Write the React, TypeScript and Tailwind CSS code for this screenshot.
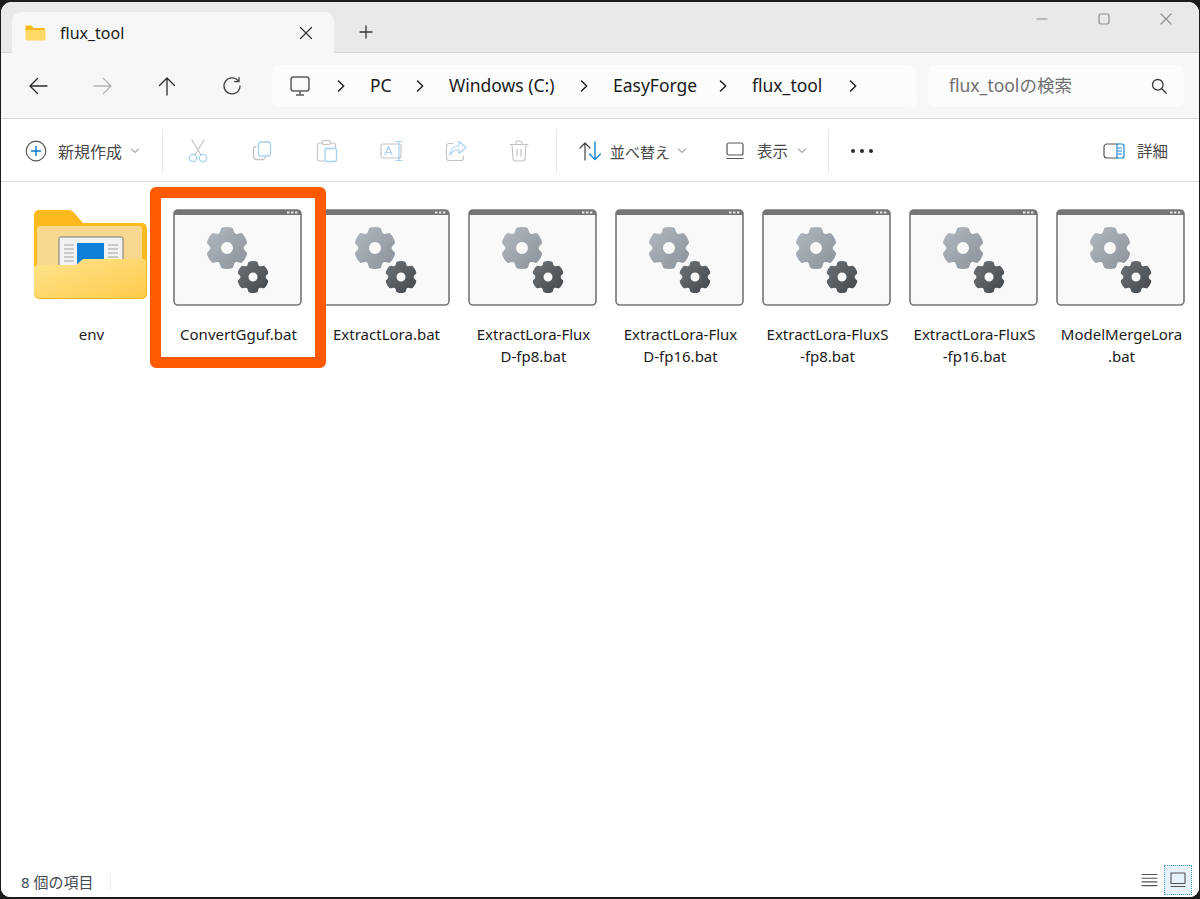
import React from "react";

const FONT = "font-['Noto_Sans','Noto_Sans_CJK_JP',sans-serif]";

const FILES = [
  ["ConvertGguf.bat"],
  ["ExtractLora.bat"],
  ["ExtractLora-Flux", "D-fp8.bat"],
  ["ExtractLora-Flux", "D-fp16.bat"],
  ["ExtractLora-FluxS", "-fp8.bat"],
  ["ExtractLora-FluxS", "-fp16.bat"],
  ["ModelMergeLora", ".bat"],
];

// gear outline with six rounded lobes, first lobe pointing up
const gearPath = (cx: number, cy: number, outer: number, inner: number, hole: number): string => {
  const pt = (r: number, deg: number) => {
    const a = ((deg - 90) * Math.PI) / 180;
    return `${(cx + r * Math.cos(a)).toFixed(2)} ${(cy + r * Math.sin(a)).toFixed(2)}`;
  };
  let d = "";
  for (let i = 0; i < 6; i++) {
    const c = i * 60;
    d += `${i === 0 ? "M" : "L"}${pt(inner * 1.04, c - 25)} `;
    d += `L${pt(outer * 0.95, c - 18)} Q${pt(outer * 1.03, c - 16)} ${pt(outer, c)} Q${pt(outer * 1.03, c + 16)} ${pt(outer * 0.95, c + 18)} `;
    d += `L${pt(inner * 1.04, c + 25)} Q${pt(inner * 0.98, c + 30)} ${pt(inner * 1.04, c + 35)} `;
  }
  d += "Z ";
  d += `M${cx - hole} ${cy} a${hole} ${hole} 0 1 0 ${hole * 2} 0 a${hole} ${hole} 0 1 0 ${-hole * 2} 0 Z`;
  return d;
};

function BatIcon({ id }: { id: number }) {
  return (
    <svg width="129" height="97" viewBox="0 0 129 97" className="block">
      <defs>
        <linearGradient id={`big${id}`} x1="0" y1="0" x2="1" y2="1">
          <stop offset="0" stopColor="#b2b8bf" />
          <stop offset="1" stopColor="#8c9299" />
        </linearGradient>
        <linearGradient id={`small${id}`} x1="0" y1="0" x2="1" y2="1">
          <stop offset="0" stopColor="#6e7377" />
          <stop offset="1" stopColor="#43474b" />
        </linearGradient>
      </defs>
      <rect x="1" y="1" width="127" height="95" rx="4" fill="#f9f9f9" stroke="#757575" strokeWidth="1.6" />
      <path d="M1 5a4 4 0 0 1 4-4h119a4 4 0 0 1 4 4v1H1z" fill="#757575" />
      <rect x="114" y="2.5" width="2.4" height="2" fill="#e8e8e8" />
      <rect x="118" y="2.5" width="2.4" height="2" fill="#e8e8e8" />
      <rect x="122" y="2.5" width="2.4" height="2" fill="#e8e8e8" />
      <path d={gearPath(54, 39, 21, 16.5, 6)} fill={`url(#big${id})`} fillRule="evenodd" />
      <path d={gearPath(80, 68, 16, 12.5, 4.5)} fill={`url(#small${id})`} fillRule="evenodd" />
    </svg>
  );
}

function FolderIcon() {
  return (
    <svg width="114" height="90" viewBox="0 0 114 90" className="block">
      <defs>
        <linearGradient id="front" x1="0" y1="0" x2="1" y2="1">
          <stop offset="0" stopColor="#ffe48f" />
          <stop offset="1" stopColor="#fdcb4a" />
        </linearGradient>
      </defs>
      <path d="M1 5a5 5 0 0 1 5-5h29c4 0 6 2 8 5l7 8h59a5 5 0 0 1 5 5v66a5 5 0 0 1-5 5H6a5 5 0 0 1-5-5z" fill="#fcba1f" />
      <path d="M4 19a3 3 0 0 1 3-3h99a3 3 0 0 1 3 3v40H4z" fill="#f6d88f" />
      <rect x="26" y="27" width="64" height="30" rx="1.5" fill="#f2f2f2" stroke="#777" strokeWidth="1" />
      <rect x="44" y="33" width="27" height="24" fill="#0f80d7" />
      <path d="M31 35h10M31 39h10M31 43h10M31 47h10M31 51h10M75 35h10M75 39h10M75 43h10M75 47h10M75 51h10" stroke="#bdbdbd" strokeWidth="1.4" />
      <path d="M1 59a4 4 0 0 1 4-4h38l7-6h60a3 3 0 0 1 3 3v31a5 5 0 0 1-5 5H6a5 5 0 0 1-5-5z" fill="url(#front)" />
    </svg>
  );
}

function Ico({ w = 24, h = 24, children }: { w?: number; h?: number; children: React.ReactNode }) {
  return (
    <svg width={w} height={h} viewBox={`0 0 ${w} ${h}`} fill="none" strokeLinecap="round" strokeLinejoin="round" className="block shrink-0">
      {children}
    </svg>
  );
}

const Chevron = () => (
  <Ico w={10} h={14}>
    <path d="M2.5 2l5.2 5-5.2 5" stroke="#1f1f1f" strokeWidth="1.5" />
  </Ico>
);

const Caret = () => (
  <Ico w={10} h={8}>
    <path d="M1.5 2l3.5 3.5L8.5 2" stroke="#6a6a6a" strokeWidth="1" />
  </Ico>
);

const Divider = () => <div className="h-[43px] w-px bg-[#e8e8e8] shrink-0" />;

const GREY = "#c4c4c4";
const BLUE = "#a5d2f4";

function Crumb({ label, w }: { label?: string; w: number }) {
  return (
    <div className="flex items-center shrink-0">
      <Chevron />
      {label ? <span className="ml-[24px] text-[17.5px] text-[#1b1b1b] whitespace-nowrap" style={{ width: w }}>{label}</span> : null}
    </div>
  );
}

export default function App() {
  return (
    <div className={`w-[1200px] h-[899px] bg-[#1c1c1c] pt-[2px] px-px pb-[2px] overflow-hidden ${FONT}`}>
      <div className="relative h-full w-full rounded-t-[11px] rounded-b-[9px] overflow-hidden bg-white flex flex-col">
        {/* title bar */}
        <div className="h-[51px] bg-[#e9e9e9] border-b border-[#d7d7d7] flex items-end pl-[11px] shrink-0">
          <div className="h-[41px] w-[322px] -mb-px bg-[#f7f7f7] rounded-t-[9px] flex items-center pl-[13px] shrink-0">
            <svg width="21" height="16" viewBox="0 0 21 16" className="block shrink-0">
              <path d="M0.5 1.5a1 1 0 0 1 1-1h5l2 2.5h10.5a1 1 0 0 1 1 1V6H0.5z" fill="#fbb91f" />
              <path d="M0.5 5h19.5a.5.5 0 0 1 .5.5v9a1 1 0 0 1-1 1h-18a1 1 0 0 1-1-1z" fill="#fed966" />
            </svg>
            <span className="ml-[14px] text-[16px] text-[#1b1b1b] w-[239px]">flux_tool</span>
            <Ico w={14} h={14}>
              <path d="M1.5 1.5l11 11M12.5 1.5l-11 11" stroke="#333" strokeWidth="1.2" />
            </Ico>
          </div>
          <div className="ml-[25px] mb-[13px] shrink-0">
            <Ico w={14} h={14}>
              <path d="M7 1v12M1 7h12" stroke="#333" strokeWidth="1.3" />
            </Ico>
          </div>
          <div className="flex-1" />
          <div className="self-start flex items-center gap-[50px] pt-[11px] pr-[27px]">
            <Ico w={12} h={12}>
              <path d="M1 6h10" stroke="#8d8d8d" strokeWidth="1.2" />
            </Ico>
            <Ico w={12} h={12}>
              <rect x="1" y="1" width="10" height="10" rx="1.5" stroke="#8d8d8d" strokeWidth="1.2" />
            </Ico>
            <Ico w={12} h={12}>
              <path d="M1 1l10 10M11 1L1 11" stroke="#8d8d8d" strokeWidth="1.1" />
            </Ico>
          </div>
        </div>

        {/* nav row */}
        <div className="h-[66px] bg-[#f7f7f7] border-b border-[#d9d9d9] flex items-center pl-[26px] pr-[15px] shrink-0">
          <div className="flex items-center gap-[42.5px] w-[245px] shrink-0">
            <Ico w={22} h={22}>
              <path d="M20 11H3M10.5 3.5L3 11l7.5 7.5" stroke="#2a2a2a" strokeWidth="1.3" />
            </Ico>
            <Ico w={22} h={22}>
              <path d="M2 11h17M11.5 3.5L19 11l-7.5 7.5" stroke="#b5b5b5" strokeWidth="1.3" />
            </Ico>
            <Ico w={22} h={22}>
              <path d="M11 20V3M3.5 10.5L11 3l7.5 7.5" stroke="#2a2a2a" strokeWidth="1.3" />
            </Ico>
            <Ico w={22} h={22}>
              <path d="M17.5 6.2A8 8 0 1 0 19 11M18 2.5v4.2h-4.4" stroke="#444" strokeWidth="1.3" />
            </Ico>
          </div>
          <div className="h-[42px] w-[645px] bg-[#fcfcfc] rounded-[7px] flex items-center pl-[18px] shrink-0">
            <svg width="20" height="20" viewBox="0 0 20 20" fill="none" className="block shrink-0">
              <rect x="1" y="1" width="18" height="14" rx="2.5" stroke="#5c5c5c" strokeWidth="1.5" />
              <path d="M6 19h8M10 15v4" stroke="#5c5c5c" strokeWidth="1.5" />
            </svg>
            <div className="ml-[26px] flex items-center">
              <Crumb label="PC" w={28} />
              <div className="ml-[17px]"><Crumb label="Windows (C:)" w={107} /></div>
              <div className="ml-[23px]"><Crumb label="EasyForge" w={82} /></div>
              <div className="ml-[23px]"><Crumb label="flux_tool" w={71} /></div>
              <div className="ml-[25px]"><Crumb w={0} /></div>
            </div>
          </div>
          <div className="ml-[11px] h-[42px] w-[256px] bg-[#fcfcfc] rounded-[7px] flex items-center justify-between pl-[21px] pr-[17px] shrink-0">
            <span className="text-[17.5px] text-[#707070]">flux_toolの検索</span>
            <Ico w={16} h={16}>
              <circle cx="6.8" cy="6.8" r="5.3" stroke="#3a3a3a" strokeWidth="1.3" />
              <path d="M10.8 10.8l4.4 4.4" stroke="#3a3a3a" strokeWidth="1.3" />
            </Ico>
          </div>
        </div>

        {/* command bar */}
        <div className="h-[63px] bg-white border-b border-[#dcdcdc] flex items-center pl-[24px] pr-[31px] pt-[2px] shrink-0 text-[15px] text-[#4a4a4a]">
          <Ico w={22} h={22}>
            <circle cx="11" cy="11" r="9.8" stroke="#555" strokeWidth="1.2" />
            <path d="M11 6.5v9M6.5 11h9" stroke="#0f7bd0" strokeWidth="1.5" />
          </Ico>
          <span className="ml-[11px] mt-[2px] w-[72px] text-[16px]">新規作成</span>
          <Caret />
          <div className="ml-[22px]"><Divider /></div>

          <div className="ml-[24px]">
            <Ico w={22} h={24}>
              <path d="M5 1l9 15M17 1L8 16" stroke={GREY} strokeWidth="1.2" />
              <circle cx="6" cy="19" r="3.7" stroke={BLUE} strokeWidth="1.3" />
              <circle cx="16" cy="19" r="3.7" stroke={BLUE} strokeWidth="1.3" />
            </Ico>
          </div>
          <div className="ml-[43px]">
            <Ico w={20} h={20}>
              <path d="M4 5.5a3 3 0 0 0-2.5 3v7a3 3 0 0 0 3 3h6a3 3 0 0 0 2.8-2" stroke={GREY} strokeWidth="1.3" />
              <rect x="6.5" y="1" width="12" height="14" rx="2.5" stroke={BLUE} strokeWidth="1.3" />
            </Ico>
          </div>
          <div className="ml-[44px]">
            <Ico w={22} h={24}>
              <path d="M6 4H4a2.5 2.5 0 0 0-2.5 2.5v13A2.5 2.5 0 0 0 4 22h4M15 4h2a2.5 2.5 0 0 1 2.5 2.5V9" stroke={GREY} strokeWidth="1.2" />
              <rect x="6.5" y="1.5" width="8" height="4" rx="1.5" stroke={GREY} strokeWidth="1.2" />
              <rect x="9" y="9.5" width="11.5" height="13" rx="2" stroke={BLUE} strokeWidth="1.3" />
            </Ico>
          </div>
          <div className="ml-[42px] relative">
            <Ico w={24} h={22}>
              <rect x="1" y="4" width="20" height="14" rx="2" stroke={GREY} strokeWidth="1.2" />
              <path d="M5 15l3.5-8.5L12 15M6.2 12.5h4.6" stroke={BLUE} strokeWidth="1.2" />
              <path d="M16 1.5h6M16 20.5h6M19 1.5v19" stroke={BLUE} strokeWidth="1.2" />
            </Ico>
          </div>
          <div className="ml-[41px]">
            <Ico w={22} h={22}>
              <path d="M8 3.5H4a2.5 2.5 0 0 0-2.5 2.5v12A2.5 2.5 0 0 0 4 20.5h12a2.5 2.5 0 0 0 2.5-2.5v-2" stroke={GREY} strokeWidth="1.2" />
              <path d="M14 1.5l7 6-7 6V10c-4 0-7 1-9 5 0-5 3-9 9-9z" stroke={BLUE} strokeWidth="1.2" />
            </Ico>
          </div>
          <div className="ml-[42px]">
            <Ico w={20} h={22}>
              <path d="M1 4.5h18M7 4.5V3a2 2 0 0 1 2-2h2a2 2 0 0 1 2 2v1.5M3 4.5l1 14a2.5 2.5 0 0 0 2.5 2.5h7a2.5 2.5 0 0 0 2.5-2.5l1-14M8 9v7M12 9v7" stroke={GREY} strokeWidth="1.2" />
            </Ico>
          </div>
          <div className="ml-[27px]"><Divider /></div>

          <div className="ml-[22px]">
            <Ico w={22} h={20}>
              <path d="M6 19V2M1 7l5-5 5 5" stroke="#444" strokeWidth="1.2" />
              <path d="M16 1v17M10.5 13l5.5 5.5 5.5-5.5" stroke="#1683d8" strokeWidth="1.4" />
            </Ico>
          </div>
          <span className="ml-[9px] mt-[2px] w-[67px]">並べ替え</span>
          <Caret />
          <div className="ml-[39px]">
            <Ico w={18} h={18}>
              <rect x="1" y="1" width="16" height="12" rx="2" stroke="#555" strokeWidth="1.2" />
              <path d="M1 16.5h16" stroke="#555" strokeWidth="1.2" />
            </Ico>
          </div>
          <span className="ml-[13px] mt-[2px] w-[40px] text-[15.5px]">表示</span>
          <Caret />
          <div className="ml-[21px]"><Divider /></div>

          <div className="ml-[22px] flex gap-[5px]">
            <div className="w-[4px] h-[4px] rounded-full bg-[#2a2a2a]" />
            <div className="w-[4px] h-[4px] rounded-full bg-[#2a2a2a]" />
            <div className="w-[4px] h-[4px] rounded-full bg-[#2a2a2a]" />
          </div>
          <div className="flex-1" />
          <Ico w={22} h={16}>
            <path d="M14 1H4a3 3 0 0 0-3 3v8a3 3 0 0 0 3 3h10" stroke="#555" strokeWidth="1.2" />
            <path d="M14 1h5a2 2 0 0 1 2 2v10a2 2 0 0 1-2 2h-5z" stroke="#1683d8" strokeWidth="1.2" />
            <path d="M15.5 5h3M15.5 8h3M15.5 11h3" stroke="#1683d8" strokeWidth="1.2" />
          </Ico>
          <span className="ml-[12px] mt-[2px] text-[15.5px]">詳細</span>
        </div>

        {/* file grid */}
        <div className="flex-1 bg-white flex pl-[17px] pt-[27px]">
          <div className="w-[147px] flex flex-col items-center shrink-0">
            <div className="h-[97px] flex items-start mr-[3px]"><div className="mt-px"><FolderIcon /></div></div>
            <div className="mt-[17px] text-[15px] leading-[22px] text-[#1b1b1b] text-center">env</div>
          </div>
          {FILES.map((lines, i) => (
            <div key={lines.join("")} className="w-[147px] flex flex-col items-center shrink-0">
              <div className={i === 0 ? "mr-[2px]" : ""}><BatIcon id={i} /></div>
              <div className={`mt-[17px] text-[15px] leading-[22px] text-[#1b1b1b] text-center whitespace-nowrap ${i === 0 ? "" : "ml-[2px]"}`}>
                {lines.map((line) => (
                  <div key={line}>{line}</div>
                ))}
              </div>
            </div>
          ))}
        </div>

        {/* status bar */}
        <div className="h-[34px] bg-white flex items-center pl-[20px] pr-[7px] shrink-0">
          <span className="mt-[4px] text-[15px] text-[#3f4a55] w-[89px]">8 個の項目</span>
          <div className="w-px h-[15px] mt-[4px] bg-[#ececec]" />
          <div className="flex-1" />
          <Ico w={17} h={14}>
            <path d="M1 1.5h15M1 5.2h15M1 8.9h15M1 12.6h15" stroke="#555" strokeWidth="1.1" />
          </Ico>
          <div className="ml-[6px] w-[28px] h-[30px] bg-[#e5f1fb] border border-dotted border-[#4a9fe0] flex items-center justify-center">
            <Ico w={16} h={16}>
              <rect x="1" y="1" width="14" height="10.5" stroke="#555" strokeWidth="1.1" />
              <path d="M1 14.5h14" stroke="#555" strokeWidth="1.1" />
            </Ico>
          </div>
        </div>

        {/* orange highlight over the first file */}
        <div className="absolute left-[149px] top-[185px] w-[176px] h-[181px] border-[11px] border-[#ff5a00] rounded-[6px]" />
      </div>
    </div>
  );
}
